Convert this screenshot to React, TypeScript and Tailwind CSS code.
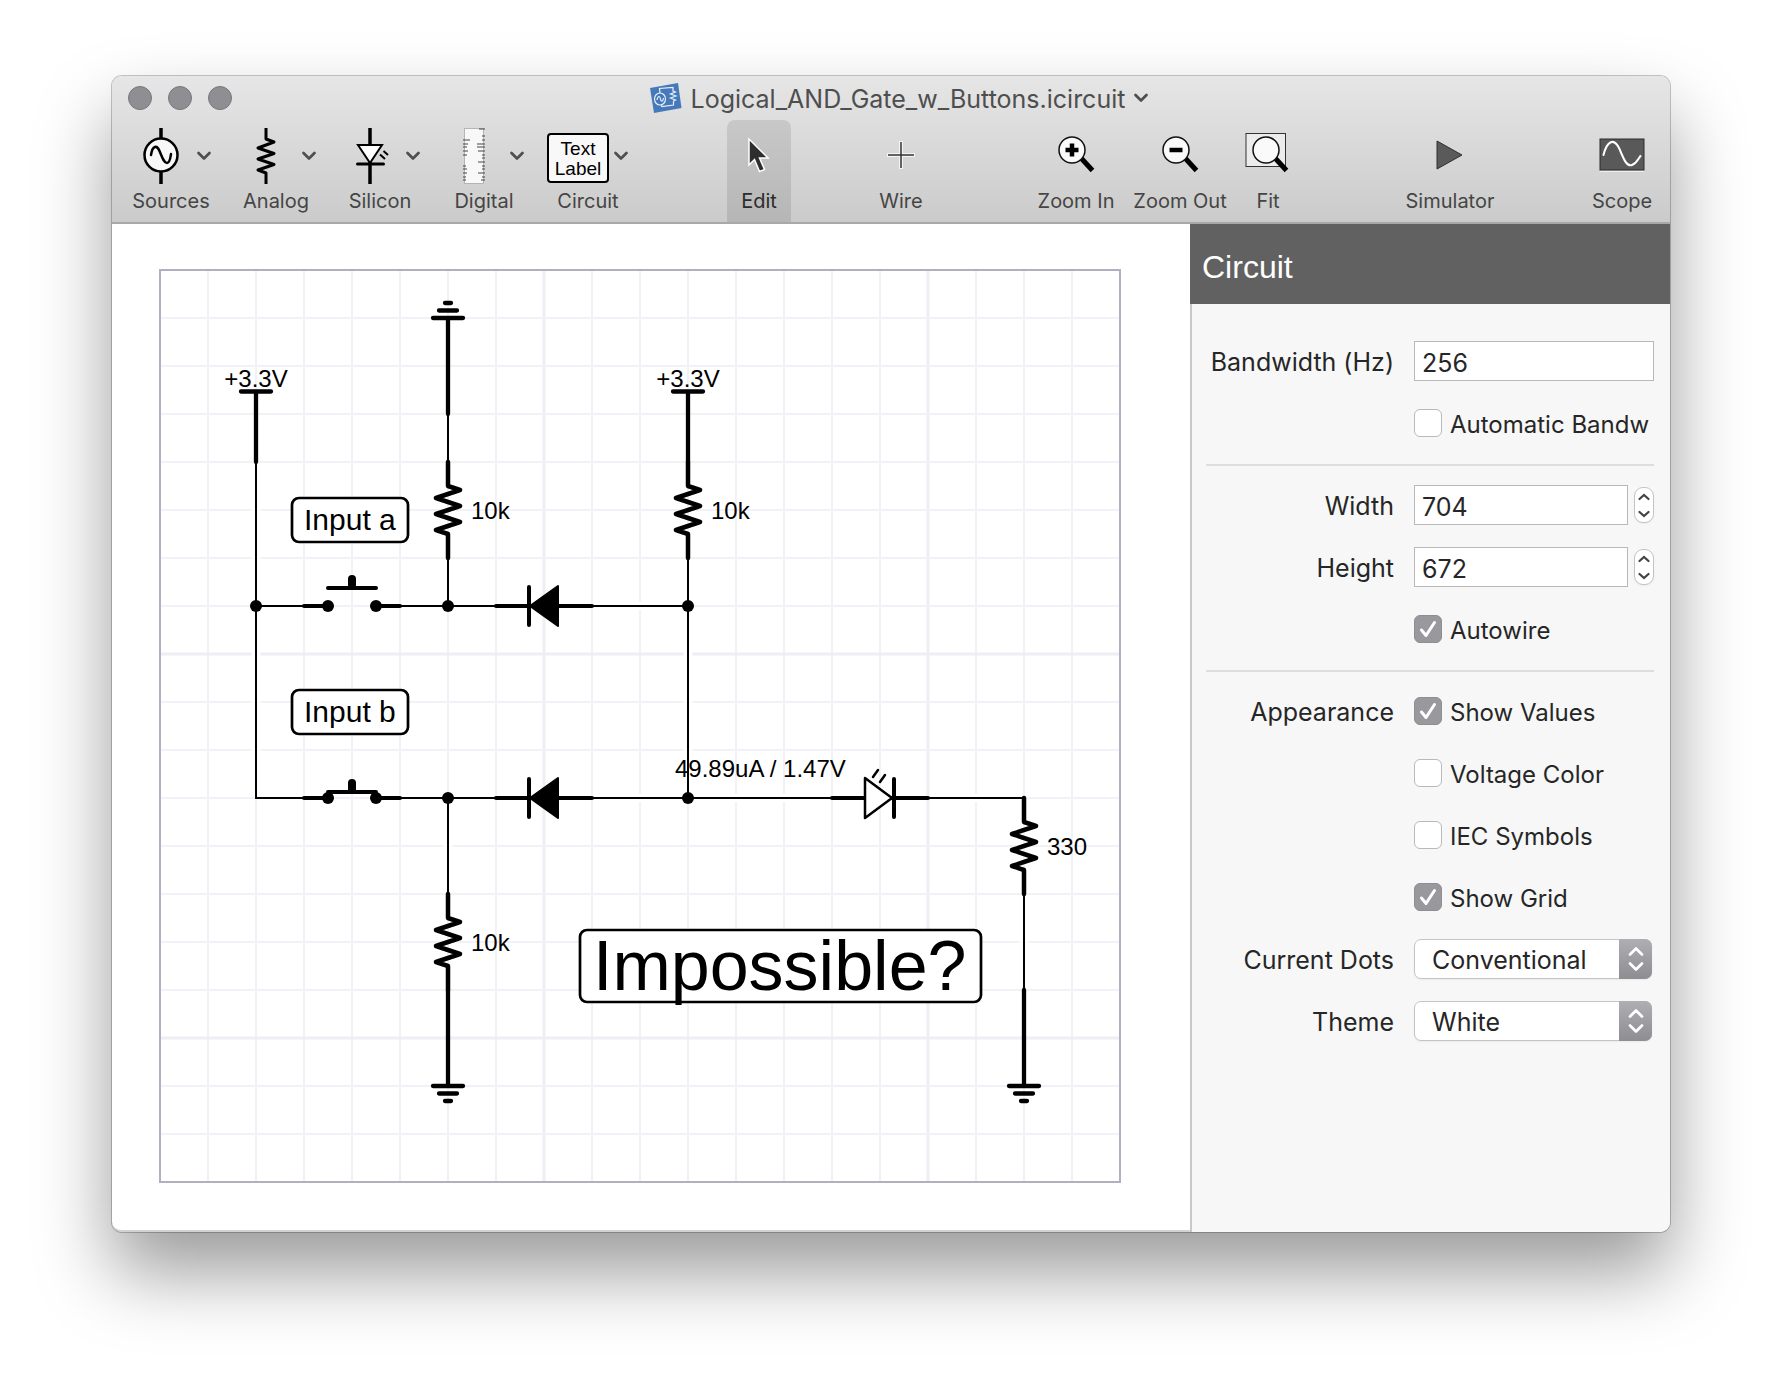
import React, { useState } from "react";

/* ---------- Toolbar icons ---------- */

function Chevron() {
  return (
    <svg width="16" height="12" viewBox="0 0 16 12" fill="none" className="shrink-0">
      <path d="M2.5 3 L8 8.5 L13.5 3" stroke="#4f4f4f" strokeWidth="2.700" strokeLinecap="round" strokeLinejoin="round" />
    </svg>
  );
}

function SourceIcon() {
  return (
    <svg width="62" height="56" viewBox="0 0 62 56" fill="none" stroke="#000">
      <path d="M31 0V56" strokeWidth="3.5" />
      <circle cx="31" cy="27" r="16.5" fill="#f8f8f8" strokeWidth="2.5" />
      <path d="M21 27C22.5 17 27 17 29.5 23S34 35 37 35S40.500 29 41 26" strokeWidth="2.5" strokeLinecap="round" />
    </svg>
  );
}

function ResistorIcon() {
  return (
    <svg width="62" height="56" viewBox="0 0 62 56" fill="none" stroke="#000" strokeWidth="3">
      <path d="M31 0V11L39 14L23 20L39 25.500L23 31L39 36.500L23 42L31 45V56" strokeLinejoin="round" />
    </svg>
  );
}

function LedIcon() {
  return (
    <svg width="62" height="56" viewBox="0 0 62 56" fill="none" stroke="#000">
      <path d="M31 0V56" strokeWidth="3.500" />
      <path d="M19 17H43L31 35Z" fill="#fff" strokeWidth="2" />
      <path d="M18.500 36H44.500" strokeWidth="3" strokeLinecap="round" />
      <path d="M44.500 23L49 27M41 26.500L46 31" strokeWidth="2" />
    </svg>
  );
}

const LEFT_PINS = [[12, 7], [16, 5], [19, 4], [23, 5], [27, 4], [38, 3], [41, 4], [45, 4], [49, 3], [52, 3]];
const RIGHT_PINS = [[1, 6], [8, 3], [12, 3], [16, 8], [19, 8], [23, 7], [27, 3], [30, 3], [34, 7], [38, 3], [41, 3], [45, 7], [49, 3], [52, 4]];

function DigitalIcon() {
  return (
    <svg width="62" height="56" viewBox="0 0 62 56" fill="none">
      <rect x="21.500" y="0.500" width="19" height="55" fill="#f8f8f8" stroke="#b5b5b5" />
      {LEFT_PINS.map(([y, w]) => (
        <path key={y} d={`M20 ${y}h${w}`} stroke="#444" strokeWidth="1" />
      ))}
      {RIGHT_PINS.map(([y, w]) => (
        <path key={y} d={`M42 ${y}h-${w}`} stroke="#444" strokeWidth="1" />
      ))}
    </svg>
  );
}

function TextLabelIcon() {
  return (
    <span className="mt-1 flex h-[50px] w-[62px] flex-col items-center justify-center rounded-[4px] border-2 border-black bg-[#f8f8f8] pt-[2px] font-['Liberation_Sans',sans-serif] text-[19px] leading-5 text-black">
      <span>Text</span>
      <span>Label</span>
    </span>
  );
}

function CursorIcon() {
  return (
    <svg width="28" height="44" viewBox="0 0 28 44">
      <path d="M4 6V32L9.500 26.500L14.500 38.500L19.500 36.500L14.500 25H23Z" fill="#2e2e2e" stroke="#fff" strokeWidth="1.500" />
    </svg>
  );
}

function WireIcon() {
  return (
    <svg width="32" height="32" viewBox="0 0 32 32" fill="none">
      <path d="M16 2V30M2 16H30" stroke="#f4f4f4" strokeWidth="4" />
      <path d="M16 3V29M3 16H29" stroke="#333" strokeWidth="1.500" />
    </svg>
  );
}

function Lens({ children }: { children?: React.ReactNode }) {
  return (
    <>
      <path d="M25 25L36.500 37.500" stroke="#000" strokeWidth="5" />
      <circle cx="16" cy="17" r="13" fill="#fafafa" stroke="#111" strokeWidth="1.500" />
      {children}
    </>
  );
}

function ZoomInIcon() {
  return (
    <svg width="40" height="44" viewBox="0 0 40 44" fill="none">
      <Lens>
        <path d="M16 10.500V23.500M9.500 17H22.500" stroke="#000" strokeWidth="4.500" />
      </Lens>
    </svg>
  );
}

function ZoomOutIcon() {
  return (
    <svg width="40" height="44" viewBox="0 0 40 44" fill="none">
      <Lens>
        <path d="M9.500 17H22.500" stroke="#000" strokeWidth="4.500" />
      </Lens>
    </svg>
  );
}

function FitIcon() {
  return (
    <svg width="48" height="44" viewBox="-6 0 48 44" fill="none">
      <rect x="-4" y="0.500" width="39.500" height="33" fill="#ececec" stroke="#333" strokeWidth="1" />
      <Lens />
    </svg>
  );
}

function PlayIcon() {
  return (
    <svg width="28" height="30" viewBox="0 0 28 30">
      <path d="M1 1L26 15L1 29Z" fill="#5a5a5a" stroke="#2f2f2f" strokeWidth="1" />
    </svg>
  );
}

function ScopeIcon() {
  return (
    <svg width="46" height="34" viewBox="0 0 46 34" fill="none">
      <rect x="1" y="1" width="44" height="31" fill="#595959" stroke="#2c2c2c" />
      <path d="M4.500 17C8 3 15 -1 20.500 11C25 22 28 29 33 27C38 25 39 21 41.500 18" stroke="#fff" strokeWidth="2" strokeLinecap="round" />
      <path d="M1 33.500H45" stroke="#eee" />
    </svg>
  );
}

function DocumentIcon() {
  return (
    <svg width="34" height="32" viewBox="0 0 34 32" fill="none">
      <path d="M1 6L29 1L32.500 26L5 31Z" fill="#4579b9" />
      <g stroke="#e8f0fa" strokeWidth="1.200">
        <ellipse cx="11" cy="17" rx="5.500" ry="6" />
        <path d="M8 18C9 13 11 14 11.500 17S14 20 14.500 16" />
        <path d="M11 11L10.500 6.500L24 5.500V9L26.500 10L21.500 12L27 14L21.500 16L26.500 18L24.500 19V23L13 24.500L12 23" />
      </g>
    </svg>
  );
}

/* ---------- Toolbar ---------- */

function MenuTool({ label, icon, wide }: { label: string; icon: React.ReactNode; wide?: boolean }) {
  return (
    <button className={`flex flex-col items-center pt-2 ${wide ? "w-[82px]" : "w-20"}`}>
      <span className="flex items-center">
        <span className="flex h-14 w-[62px] items-center justify-center">{icon}</span>
        <span className="ml-1">
          <Chevron />
        </span>
      </span>
      <span className="mt-[5px] text-xl leading-6">{label}</span>
    </button>
  );
}

function Tool({ label, icon, width, active }: { label: string; icon: React.ReactNode; width: string; active?: boolean }) {
  return (
    <button
      className={`flex flex-col items-center whitespace-nowrap pt-[7px] ${width} ${active ? "rounded-t-lg bg-linear-to-b from-[#c8c8c8] to-[#b6b6b6] text-[#2b2b2b]" : ""}`}
    >
      <span className="flex h-14 items-center justify-center">{icon}</span>
      <span className="mt-[6px] text-xl leading-6">{label}</span>
    </button>
  );
}

function Header() {
  return (
    <header className="rounded-t-[10px] border-b-2 border-[#a9a9a9] bg-linear-to-b from-[#e6e6e6] to-[#cbcbcb] text-[#454545]">
      <div className="grid h-11 grid-cols-[1fr_auto_1fr] items-center pl-4">
        <div className="flex gap-4">
          {["Close", "Minimize", "Zoom"].map((name) => (
            <button key={name} aria-label={name} className="size-6 rounded-full border border-[#77767b] bg-[#8f8e93]" />
          ))}
        </div>
        <button className="flex items-center text-[25px] leading-8 text-[#4e4e4e]">
          <DocumentIcon />
          <span className="mx-2 pt-[2px]">Logical_AND_Gate_w_Buttons.icircuit</span>
          <Chevron />
        </button>
        <div />
      </div>
      <div className="flex h-[102px] pl-[18px] pr-4">
        <div className="flex gap-6">
          <MenuTool label="Sources" icon={<SourceIcon />} wide />
          <MenuTool label="Analog" icon={<ResistorIcon />} />
          <MenuTool label="Silicon" icon={<LedIcon />} />
          <MenuTool label="Digital" icon={<DigitalIcon />} />
          <MenuTool label="Circuit" icon={<TextLabelIcon />} />
        </div>
        <div className="grow-[99]" />
        <Tool label="Edit" icon={<CursorIcon />} width="w-16" active />
        <div className="w-[78px]" />
        <Tool label="Wire" icon={<WireIcon />} width="w-16" />
        <div className="grow-[103]" />
        <div className="flex gap-4">
          <Tool label="Zoom In" icon={<ZoomInIcon />} width="w-20" />
          <Tool label="Zoom Out" icon={<ZoomOutIcon />} width="w-24" />
          <Tool label="Fit" icon={<FitIcon />} width="w-12" />
        </div>
        <div className="grow-[110]" />
        <Tool label="Simulator" icon={<PlayIcon />} width="w-24" />
        <div className="grow-[92]" />
        <Tool label="Scope" icon={<ScopeIcon />} width="w-16" />
      </div>
    </header>
  );
}

/* ---------- Schematic ---------- */

type XY = { x: number; y: number };

function Resistor({ x, y, value }: XY & { value: string }) {
  return (
    <>
      <path
        d={`M${x} ${y}v24l12 4l-24 8l24 8l-24 8l24 8l-24 8l12 4v24`}
        fill="none"
        stroke="#000"
        strokeWidth="4.500"
        strokeLinecap="round"
        strokeLinejoin="round"
      />
      <text x={x + 23} y={y + 57} fontSize="24">
        {value}
      </text>
    </>
  );
}

function Ground({ x, y, length, up }: XY & { length: number; up?: boolean }) {
  const s = up ? -1 : 1;
  return (
    <path
      d={`M${x} ${y - s * length}V${y}M${x - 15} ${y}h30M${x - 9} ${y + s * 7.5}h18M${x - 3} ${y + s * 15}h6`}
      stroke="#000"
      strokeWidth="4.300"
      strokeLinecap="round"
    />
  );
}

function Supply({ x }: { x: number }) {
  return (
    <>
      <path d={`M${x - 15} 121.500h30M${x} 122V192`} stroke="#000" strokeWidth="4.300" strokeLinecap="round" />
      <text x={x} y="117" fontSize="24" textAnchor="middle">
        +3.3V
      </text>
    </>
  );
}

function Diode({ x, y }: XY) {
  return (
    <>
      <path d={`M${x} ${y}h96M${x + 33} ${y - 19}v38`} stroke="#000" strokeWidth="4" strokeLinecap="round" />
      <path d={`M${x + 34} ${y}l28 -20v40z`} stroke="#000" strokeWidth="2" strokeLinejoin="round" />
    </>
  );
}

function Switch({ y, closed }: { y: number; closed?: boolean }) {
  const bar = closed ? y - 6 : y - 18;
  return (
    <>
      <path d={`M144 ${y}H168M216 ${y}H240M168 ${bar}H216`} stroke="#000" strokeWidth="4" strokeLinecap="round" />
      <path d={`M192 ${bar - 9}V${bar - 3}`} stroke="#000" strokeWidth="8" strokeLinecap="round" />
      <circle cx="168" cy={y} r="6" />
      <circle cx="216" cy={y} r="6" />
    </>
  );
}

function LabelBox({ x, y, w, h, size, tx, ty, text }: XY & { w: number; h: number; size: number; tx: number; ty: number; text: string }) {
  return (
    <>
      <rect x={x} y={y} width={w} height={h} rx="7" fill="#fff" stroke="#000" strokeWidth="2.700" />
      <text x={tx} y={ty} fontSize={size}>
        {text}
      </text>
    </>
  );
}

const WIRES = [
  "M96 192V336",
  "M96 336V528H144",
  "M96 336H144",
  "M240 336H288",
  "M288 144V192",
  "M288 288V336",
  "M288 336H336",
  "M432 336H528",
  "M528 288V336",
  "M528 336V528",
  "M240 528H288",
  "M288 528H336",
  "M288 528V624",
  "M432 528H528",
  "M528 528H672",
  "M768 528H864",
  "M864 624V720",
];

/* Short white bands that hide the grid where it crosses a wire. */
const HALOS = [
  "M96 235V293",
  "M96 379V389",
  "M96 427V485",
  "M475 336h10",
  "M528 379v10",
  "M528 427v58",
  "M288 571v10",
  "M475 528h10",
  "M571 528h10",
  "M619 528h10",
  "M811 528h10",
  "M864 667v10",
];

const NODES = [
  [96, 336],
  [288, 336],
  [528, 336],
  [288, 528],
  [528, 528],
];

function Schematic() {
  const columns = Array.from({ length: 19 }, (_, i) => (i + 1) * 48);
  const rows = Array.from({ length: 18 }, (_, i) => (i + 1) * 48);
  return (
    <svg
      width="964"
      height="916"
      viewBox="-2 -2 964 916"
      className="block font-['Liberation_Sans',sans-serif]"
      role="img"
      aria-label="Logical AND gate circuit"
    >
      {columns.map((x) => (
        <path key={x} d={`M${x} 0V912`} stroke={x % 384 === 0 ? "#eeeef5" : "#f1f1f7"} strokeWidth={x % 384 === 0 ? 3 : 2} />
      ))}
      {rows.map((y) => (
        <path key={y} d={`M0 ${y}H960`} stroke={y % 384 === 0 ? "#eeeef5" : "#f1f1f7"} strokeWidth={y % 384 === 0 ? 3 : 2} />
      ))}
      <rect x="0" y="0" width="960" height="912" fill="none" stroke="#b0b0c0" strokeWidth="2" />
      {HALOS.map((d) => (
        <path key={d} d={d} stroke="#fff" strokeWidth="9" />
      ))}
      {WIRES.map((d) => (
        <path key={d} d={d} fill="none" stroke="#000" strokeWidth="2" />
      ))}
      <Ground x={288} y={48} length={96} up />
      <Supply x={96} />
      <Supply x={528} />
      <Resistor x={288} y={192} value="10k" />
      <Resistor x={528} y={192} value="10k" />
      <Switch y={336} />
      <Switch y={528} closed />
      <Diode x={336} y={336} />
      <Diode x={336} y={528} />
      <Resistor x={288} y={624} value="10k" />
      <Ground x={288} y={816} length={96} />
      <Resistor x={864} y={528} value="330" />
      <Ground x={864} y={816} length={96} />
      <path d="M672 528h96M734 509v38" stroke="#000" strokeWidth="4" strokeLinecap="round" />
      <path d="M705 508L732 528L705 548Z" fill="#fff" stroke="#000" strokeWidth="2.500" strokeLinejoin="round" />
      <path d="M713 507L718 500M720 512L725 505" stroke="#000" strokeWidth="2.500" strokeLinecap="round" />
      {NODES.map(([x, y]) => (
        <circle key={`${x}-${y}`} cx={x} cy={y} r="6" />
      ))}
      <text x="515" y="507" fontSize="24">
        49.89uA / 1.47V
      </text>
      <LabelBox x={132} y={228} w={116} h={44} size={30} tx={144} ty={260} text="Input a" />
      <LabelBox x={132} y={420} w={116} h={44} size={30} tx={144} ty={452} text="Input b" />
      <LabelBox x={420} y={660} w={401} h={72} size={70} tx={433} ty={720} text="Impossible?" />
    </svg>
  );
}

/* ---------- Inspector ---------- */

const ROW = "grid min-h-10 grid-cols-[188px_minmax(0,1fr)] items-center gap-x-5";

function Row({ label, htmlFor, children }: { label?: string; htmlFor?: string; children: React.ReactNode }) {
  return (
    <div className={ROW}>
      <label htmlFor={htmlFor} className="whitespace-nowrap pt-[2px] text-right">
        {label}
      </label>
      {children}
    </div>
  );
}

function Check({ label, on }: { label: string; on?: boolean }) {
  const [checked, setChecked] = useState(!!on);
  return (
    <label className="flex items-center gap-2 overflow-hidden whitespace-nowrap text-2xl">
      <span className="relative size-7 shrink-0">
        <input
          type="checkbox"
          checked={checked}
          onChange={(e) => setChecked(e.target.checked)}
          className="block size-7 appearance-none rounded-[6px] border border-[#b9b9b9] bg-white checked:border-[#8e8d92] checked:bg-[#99989d]"
        />
        {checked && (
          <svg width="28" height="28" viewBox="0 0 28 28" fill="none" className="pointer-events-none absolute inset-0">
            <path d="M7.500 15L12 20.500L20.500 7.500" stroke="#fff" strokeWidth="3" strokeLinecap="round" strokeLinejoin="round" />
          </svg>
        )}
      </span>
      <span className="pt-[3px]">{label}</span>
    </label>
  );
}

function Stepper({ label }: { label: string }) {
  return (
    <div className="flex h-9 w-5 shrink-0 flex-col overflow-hidden rounded-[9px] border border-[#c4c4c4] bg-white shadow-xs">
      <button aria-label={`Increase ${label}`} className="flex flex-1 items-center justify-center">
        <svg width="12" height="8" viewBox="0 0 12 8" fill="none">
          <path d="M1.500 6L6 2L10.500 6" stroke="#444" strokeWidth="2.200" strokeLinecap="round" />
        </svg>
      </button>
      <button aria-label={`Decrease ${label}`} className="flex flex-1 items-center justify-center">
        <svg width="12" height="8" viewBox="0 0 12 8" fill="none">
          <path d="M1.500 2L6 6L10.500 2" stroke="#444" strokeWidth="2.200" strokeLinecap="round" />
        </svg>
      </button>
    </div>
  );
}

function TextField({ id, value }: { id: string; value: string }) {
  return (
    <input id={id} type="text" defaultValue={value} className="h-10 w-full min-w-0 border border-[#b8b8b8] bg-white pl-[7px] pt-[3px] outline-none" />
  );
}

function Popup({ id, options }: { id: string; options: string[] }) {
  return (
    <div className="relative mr-[2px] h-10">
      <select id={id} className="h-10 w-full appearance-none rounded-[7px] border border-[#c4c4c4] bg-white pl-[17px] pr-10 pt-[2px] shadow-xs outline-none">
        {options.map((o) => (
          <option key={o}>{o}</option>
        ))}
      </select>
      <span className="pointer-events-none absolute inset-y-0 right-0 flex w-[33px] items-center justify-center rounded-r-[7px] bg-linear-to-b from-[#afaeb3] to-[#8e8d92]">
        <svg width="20" height="28" viewBox="0 0 20 28" fill="none" stroke="#fff" strokeWidth="2.700" strokeLinecap="round" strokeLinejoin="round">
          <path d="M4 9.500L10 3.500L16 9.500M4 18.500L10 24.500L16 18.500" />
        </svg>
      </span>
    </div>
  );
}

function Inspector() {
  return (
    <aside className="flex w-[480px] shrink-0 flex-col rounded-br-[10px] bg-[#f7f7f7] text-[#262626]">
      <h2 className="flex h-20 items-center bg-[#616161] pl-3 pt-[6px] font-['Liberation_Sans',sans-serif] text-[32px] text-white">Circuit</h2>
      <form className="grow rounded-br-[10px] border-l-2 border-[#c8c8c8] pb-12 pl-[14px] pr-4 pt-[37px] text-[25px] leading-8">
        <div className="grid gap-[22px]">
          <Row label="Bandwidth (Hz)" htmlFor="bandwidth">
            <TextField id="bandwidth" value="256" />
          </Row>
          <Row>
            <Check label="Automatic Bandw" />
          </Row>
        </div>
        <hr className="mb-[19px] mt-[21px] border-t-2 border-[#dedede]" />
        <div className="grid gap-[22px]">
          <Row label="Width" htmlFor="width">
            <div className="flex items-center gap-[6px]">
              <TextField id="width" value="704" />
              <Stepper label="width" />
            </div>
          </Row>
          <Row label="Height" htmlFor="height">
            <div className="flex items-center gap-[6px]">
              <TextField id="height" value="672" />
              <Stepper label="height" />
            </div>
          </Row>
          <Row>
            <Check label="Autowire" on />
          </Row>
        </div>
        <hr className="mb-[19px] mt-[21px] border-t-2 border-[#dedede]" />
        <div className="grid gap-[22px]">
          <Row label="Appearance">
            <Check label="Show Values" on />
          </Row>
          <Row>
            <Check label="Voltage Color" />
          </Row>
          <Row>
            <Check label="IEC Symbols" />
          </Row>
          <Row>
            <Check label="Show Grid" on />
          </Row>
          <Row label="Current Dots" htmlFor="dots">
            <Popup id="dots" options={["Conventional", "Electron"]} />
          </Row>
          <Row label="Theme" htmlFor="theme">
            <Popup id="theme" options={["White", "Black"]} />
          </Row>
        </div>
      </form>
    </aside>
  );
}

export default function App() {
  return (
    <div className="min-h-screen bg-white px-28 pb-36 pt-[76px] font-['Inter',sans-serif]">
      <div className="rounded-[10px] bg-white shadow-[0_0_0_1px_rgba(0,0,0,0.22),0_40px_76px_rgba(0,0,0,0.4)]">
        <Header />
        <div className="flex">
          <main className="min-w-0 grow overflow-hidden rounded-bl-[10px] border-b-2 border-[#d2d2d2] pb-[46px] pl-[46px] pt-11">
            <Schematic />
          </main>
          <Inspector />
        </div>
      </div>
    </div>
  );
}
